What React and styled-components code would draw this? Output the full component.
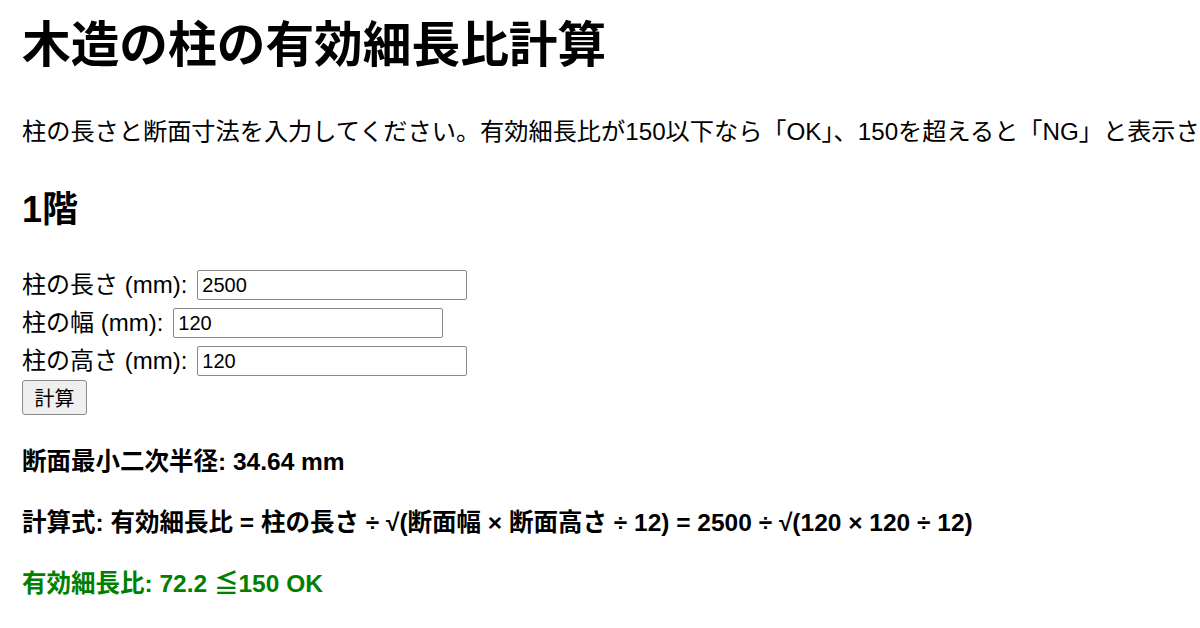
import React from "react";
import styled, { createGlobalStyle } from "styled-components";

const GlobalStyle = createGlobalStyle`
  html, body {
    margin: 0;
    padding: 0;
    background: #ffffff;
    overflow: hidden;
  }
  body {
    font-family: "Liberation Sans", Arial, "Noto Sans CJK JP", sans-serif;
    color: #000000;
  }
`;

const Page = styled.div`
  padding: 0 22px;
  width: 1200px;
  box-sizing: border-box;
`;

const Title = styled.h1`
  font-size: 48.7px;
  line-height: 56px;
  font-weight: 700;
  margin: 17px 0 0;
`;

const Lead = styled.p`
  font-size: 24.2px;
  line-height: 28px;
  margin: 45px 0 0;
  white-space: nowrap;
`;

const Floor = styled.h2`
  font-size: 36px;
  line-height: 40px;
  font-weight: 700;
  margin: 44px 0 0;
`;

const Form = styled.div`
  margin-top: 40px;
  display: flex;
  flex-direction: column;
  align-items: flex-start;
  gap: 8px;
`;

const Row = styled.label`
  display: flex;
  align-items: center;
  gap: 10px;
  height: 30px;
  font-size: 24px;
  line-height: 28px;
`;

const Field = styled.input`
  width: 270px;
  height: 30px;
  box-sizing: border-box;
  border: 1px solid #8a8a8a;
  border-radius: 2px;
  padding: 0 4px;
  margin: 0;
  font-family: "Liberation Sans", Arial, "Noto Sans CJK JP", sans-serif;
  font-size: 20px;
  color: #000;
  background: #fff;
`;

const CalcButton = styled.button`
  margin-top: -4px;
  width: 65px;
  height: 35px;
  box-sizing: border-box;
  border: 1px solid #8a8a8a;
  border-radius: 3px;
  background: #efefef;
  font-family: "Liberation Sans", Arial, "Noto Sans CJK JP", sans-serif;
  font-size: 20px;
  color: #000;
  padding: 0;
`;

const Result = styled.p`
  font-size: 24.5px;
  line-height: 28px;
  font-weight: 700;
  margin: 33px 0 0;
  color: ${(p) => p.$color || "#000000"};
  white-space: nowrap;
`;

const fields = [
  { label: "柱の長さ (mm):", value: "2500" },
  { label: "柱の幅 (mm):", value: "120" },
  { label: "柱の高さ (mm):", value: "120" },
];

export default function App() {
  return (
    <Page>
      <GlobalStyle />
      <Title>木造の柱の有効細長比計算</Title>
      <Lead>
        柱の長さと断面寸法を入力してください。有効細長比が150以下なら「OK」、150を超えると「NG」と表示されます。
      </Lead>
      <Floor>1階</Floor>
      <Form>
        {fields.map((f) => (
          <Row key={f.label}>
            {f.label}
            <Field type="text" defaultValue={f.value} />
          </Row>
        ))}
        <CalcButton>計算</CalcButton>
      </Form>
      <Result>断面最小二次半径: 34.64 mm</Result>
      <Result>
        計算式: 有効細長比 = 柱の長さ ÷ √(断面幅 × 断面高さ ÷ 12) = 2500 ÷ √(120 × 120 ÷ 12)
      </Result>
      <Result $color="#008000">有効細長比: 72.2 ≦150 OK</Result>
    </Page>
  );
}
